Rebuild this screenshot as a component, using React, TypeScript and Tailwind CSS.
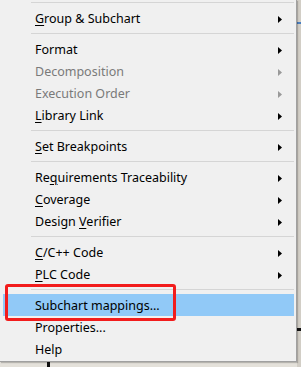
import React from 'react';

type Item =
  | { kind: 'sep'; first?: boolean }
  | {
      kind: 'item';
      label: string;
      accel?: number;
      sub?: boolean;
      disabled?: boolean;
      active?: boolean;
    };

const items: Item[] = [
  { kind: 'sep', first: true },
  { kind: 'item', label: 'Group & Subchart', accel: 0, sub: true },
  { kind: 'sep' },
  { kind: 'item', label: 'Format', sub: true },
  { kind: 'item', label: 'Decomposition', sub: true, disabled: true },
  { kind: 'item', label: 'Execution Order', sub: true, disabled: true },
  { kind: 'item', label: 'Library Link', accel: 0, sub: true },
  { kind: 'sep' },
  { kind: 'item', label: 'Set Breakpoints', accel: 0, sub: true },
  { kind: 'sep' },
  { kind: 'item', label: 'Requirements Traceability', accel: 2, sub: true },
  { kind: 'item', label: 'Coverage', accel: 0, sub: true },
  { kind: 'item', label: 'Design Verifier', accel: 7, sub: true },
  { kind: 'sep' },
  { kind: 'item', label: 'C/C++ Code', accel: 0, sub: true },
  { kind: 'item', label: 'PLC Code', accel: 0, sub: true },
  { kind: 'sep' },
  { kind: 'item', label: 'Subchart mappings...', active: true },
  { kind: 'item', label: 'Properties...' },
  { kind: 'item', label: 'Help' },
];

function Label({ text, accel }: { text: string; accel?: number }) {
  if (accel === undefined) return <span>{text}</span>;
  return (
    <span>
      {text.slice(0, accel)}
      <span className="underline underline-offset-[2px] decoration-1">{text[accel]}</span>
      {text.slice(accel + 1)}
    </span>
  );
}

function Arrow({ disabled }: { disabled?: boolean }) {
  return (
    <svg width="4" height="7" viewBox="0 0 4 7" className="block">
      <polygon points="0,0 4,3.5 0,7" fill={disabled ? '#9a9a9a' : '#000'} />
    </svg>
  );
}

export default function App() {
  return (
    <div className="flex w-[301px] h-[367px] overflow-hidden bg-[#e4e1da]">
      <div className="flex flex-col w-[297px]">
        <div
          className="relative flex flex-col h-[362px] bg-[#f0f0f0] border-r border-b border-[#a0a0a0] shadow-[1px_1px_1px_rgba(0,0,0,0.2)]"
          style={{ fontFamily: '"Noto Sans", "Noto Sans CJK SC", sans-serif' }}
        >
          {items.map((it, i) =>
            it.kind === 'sep' ? (
              <div key={i} className={it.first ? 'h-[7px] pt-[2px]' : 'h-[9px] pt-[4px]'}>
                <div className="ml-[31px] mr-[2px] h-px bg-[#d5d5d5]" />
              </div>
            ) : (
              <div
                key={i}
                className={
                  'flex items-center h-[22px] ml-[3px] mr-[2px] pl-[32px] pr-[12px] pt-[2px] text-[12.5px] leading-none ' +
                  (it.active ? 'bg-[#91c9f7] ' : '') +
                  (it.disabled ? 'text-[#7a7a7a]' : 'text-black')
                }
              >
                <div className="flex-1">
                  <Label text={it.label} accel={it.accel} />
                </div>
                {it.sub && <Arrow disabled={it.disabled} />}
              </div>
            )
          )}

          {/* red annotation box drawn over the menu */}
          <div className="absolute left-[5px] top-[284px] w-[171px] h-[37px] border-[3px] border-[#f21c1c] rounded-[3px]" />
        </div>
        <div className="flex-1 pl-[47px]">
          <div className="w-[3px] h-full bg-[#111]" />
        </div>
      </div>

      {/* sliver of the diagram behind the menu */}
      <div className="flex flex-col flex-1 bg-[#d2cec6] pt-[22px]">
        <div className="h-[2px] bg-[#4a7fc0]" />
        <div className="h-[304px]" />
        <div className="h-[3px] bg-[#111]" />
      </div>
    </div>
  );
}
